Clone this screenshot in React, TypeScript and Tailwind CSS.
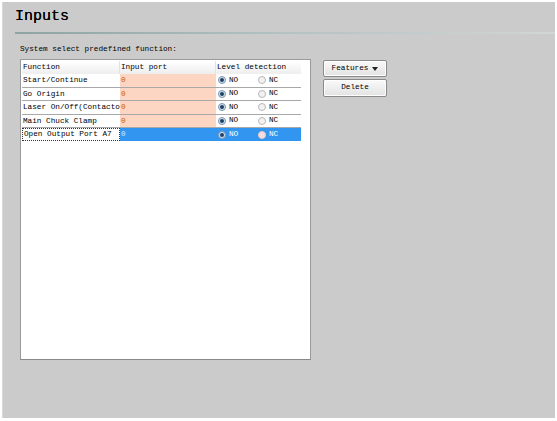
import React from "react";

type Row = { name: string; port: string; no: boolean };

const rows: Row[] = [
  { name: "Start/Continue", port: "0", no: true },
  { name: "Go Origin", port: "0", no: true },
  { name: "Laser On/Off(Contacto", port: "0", no: true },
  { name: "Main Chuck Clamp", port: "0", no: true },
];

function Radio({ on, sel }: { on: boolean; sel?: boolean }) {
  if (on) {
    return (
      <span className="inline-block w-[8px] h-[8px] rounded-full bg-[#d5e3f0] border border-[#7c95ad] relative">
        <span className="absolute left-[1px] top-[1px] w-[4px] h-[4px] rounded-full bg-[#1f4166]" />
      </span>
    );
  }
  return (
    <span
      className={
        "inline-block w-[8px] h-[8px] rounded-full border " +
        (sel ? "bg-[#f4dede] border-[#f0c8c8]" : "bg-[#f2f2f2] border-[#b8b8b8]")
      }
    />
  );
}

export default function App() {
  const mono = { fontFamily: '"Liberation Mono", "DejaVu Sans Mono", monospace' };
  return (
    <div className="w-[557px] h-[421px] bg-white pt-[2px] pl-[2px]" style={mono}>
      <div className="w-[553px] h-[416px] bg-[#cbcbcb] border-l border-[#d8d8d8] flex flex-col">
        <div className="h-[30px] pl-[12px] pt-[6px] text-[15px] leading-[18px] text-black [text-shadow:0_0_0.4px_#000]">
          Inputs
        </div>
        <div className="ml-[12px] h-[2px] bg-gradient-to-r from-[#8ea3a3] via-[#b4c2c2] to-[#d2d6d6]" />
        <div className="pl-[17px] pt-[10px] text-[7.7px] leading-[10px] text-black">
          System select predefined function:
        </div>
        <div className="flex pl-[17px] pt-[5px] gap-[12px]">
          <div className="w-[291px] h-[301px] bg-white border border-[#9a9a9a] border-b-[#888] pt-[1px] pl-[1px]">
            <div className="flex h-[13px] text-[7.7px] leading-[12px] text-black bg-gradient-to-b from-white to-[#eeeeee] w-[279px]">
              <div className="w-[98px] pl-[1px] border-r border-[#e2e2e2]">Function</div>
              <div className="w-[96px] pl-[1px] border-r border-[#e2e2e2]">Input port</div>
              <div className="flex-1 pl-[1px]">Level detection</div>
            </div>
            {rows.map((r) => (
              <div
                key={r.name}
                className="flex h-[13.5px] text-[7.7px] leading-[13px] text-black border-b border-[#a8a8a8] w-[279px]"
              >
                <div className="w-[98px] pl-[1px] overflow-hidden whitespace-nowrap">{r.name}</div>
                <div className="w-[96px] pl-[1px] bg-[#fcd6c3] text-[#c85a00]">{r.port}</div>
                <div className="flex-1 flex items-center pl-[2px]">
                  <div className="w-[40px] flex items-center gap-[3px]">
                    <Radio on={r.no} />
                    <span>NO</span>
                  </div>
                  <div className="flex items-center gap-[3px]">
                    <Radio on={!r.no} />
                    <span>NC</span>
                  </div>
                </div>
              </div>
            ))}
            <div className="flex h-[13px] text-[7.7px] leading-[11px] w-[279px]">
              <div className="w-[98px] pl-[1px] border border-dotted border-[#333] bg-white text-black whitespace-nowrap">
                Open Output Port A7
              </div>
              <div className="flex-1 flex bg-[#3296f0] text-white">
                <div className="w-[96px] pl-[1px] leading-[13px] text-[#d8ecff]">0</div>
                <div className="flex-1 flex items-center pl-[2px]">
                  <div className="w-[40px] flex items-center gap-[3px]">
                    <Radio on />
                    <span>NO</span>
                  </div>
                  <div className="flex items-center gap-[3px]">
                    <Radio on={false} sel />
                    <span>NC</span>
                  </div>
                </div>
              </div>
            </div>
          </div>
          <div className="flex flex-col gap-[2px] pt-[1px]">
            <button className="w-[64px] h-[17px] rounded-[2px] border border-[#8a8a8a] bg-gradient-to-b from-[#fafafa] to-[#e2e2e2] text-[7.7px] text-black flex items-center justify-center gap-[4px] shadow-[inset_0_0_0_1px_#fff]">
              <span>Features</span>
              <svg width="6" height="4" viewBox="0 0 6 4">
                <path d="M0 0 L6 0 L3 4 Z" fill="#222" />
              </svg>
            </button>
            <button className="w-[64px] h-[18px] rounded-[2px] border border-[#8a8a8a] bg-gradient-to-b from-[#fafafa] to-[#e2e2e2] text-[7.7px] text-black flex items-center justify-center shadow-[inset_0_0_0_1px_#fff]">
              Delete
            </button>
          </div>
        </div>
      </div>
    </div>
  );
}
